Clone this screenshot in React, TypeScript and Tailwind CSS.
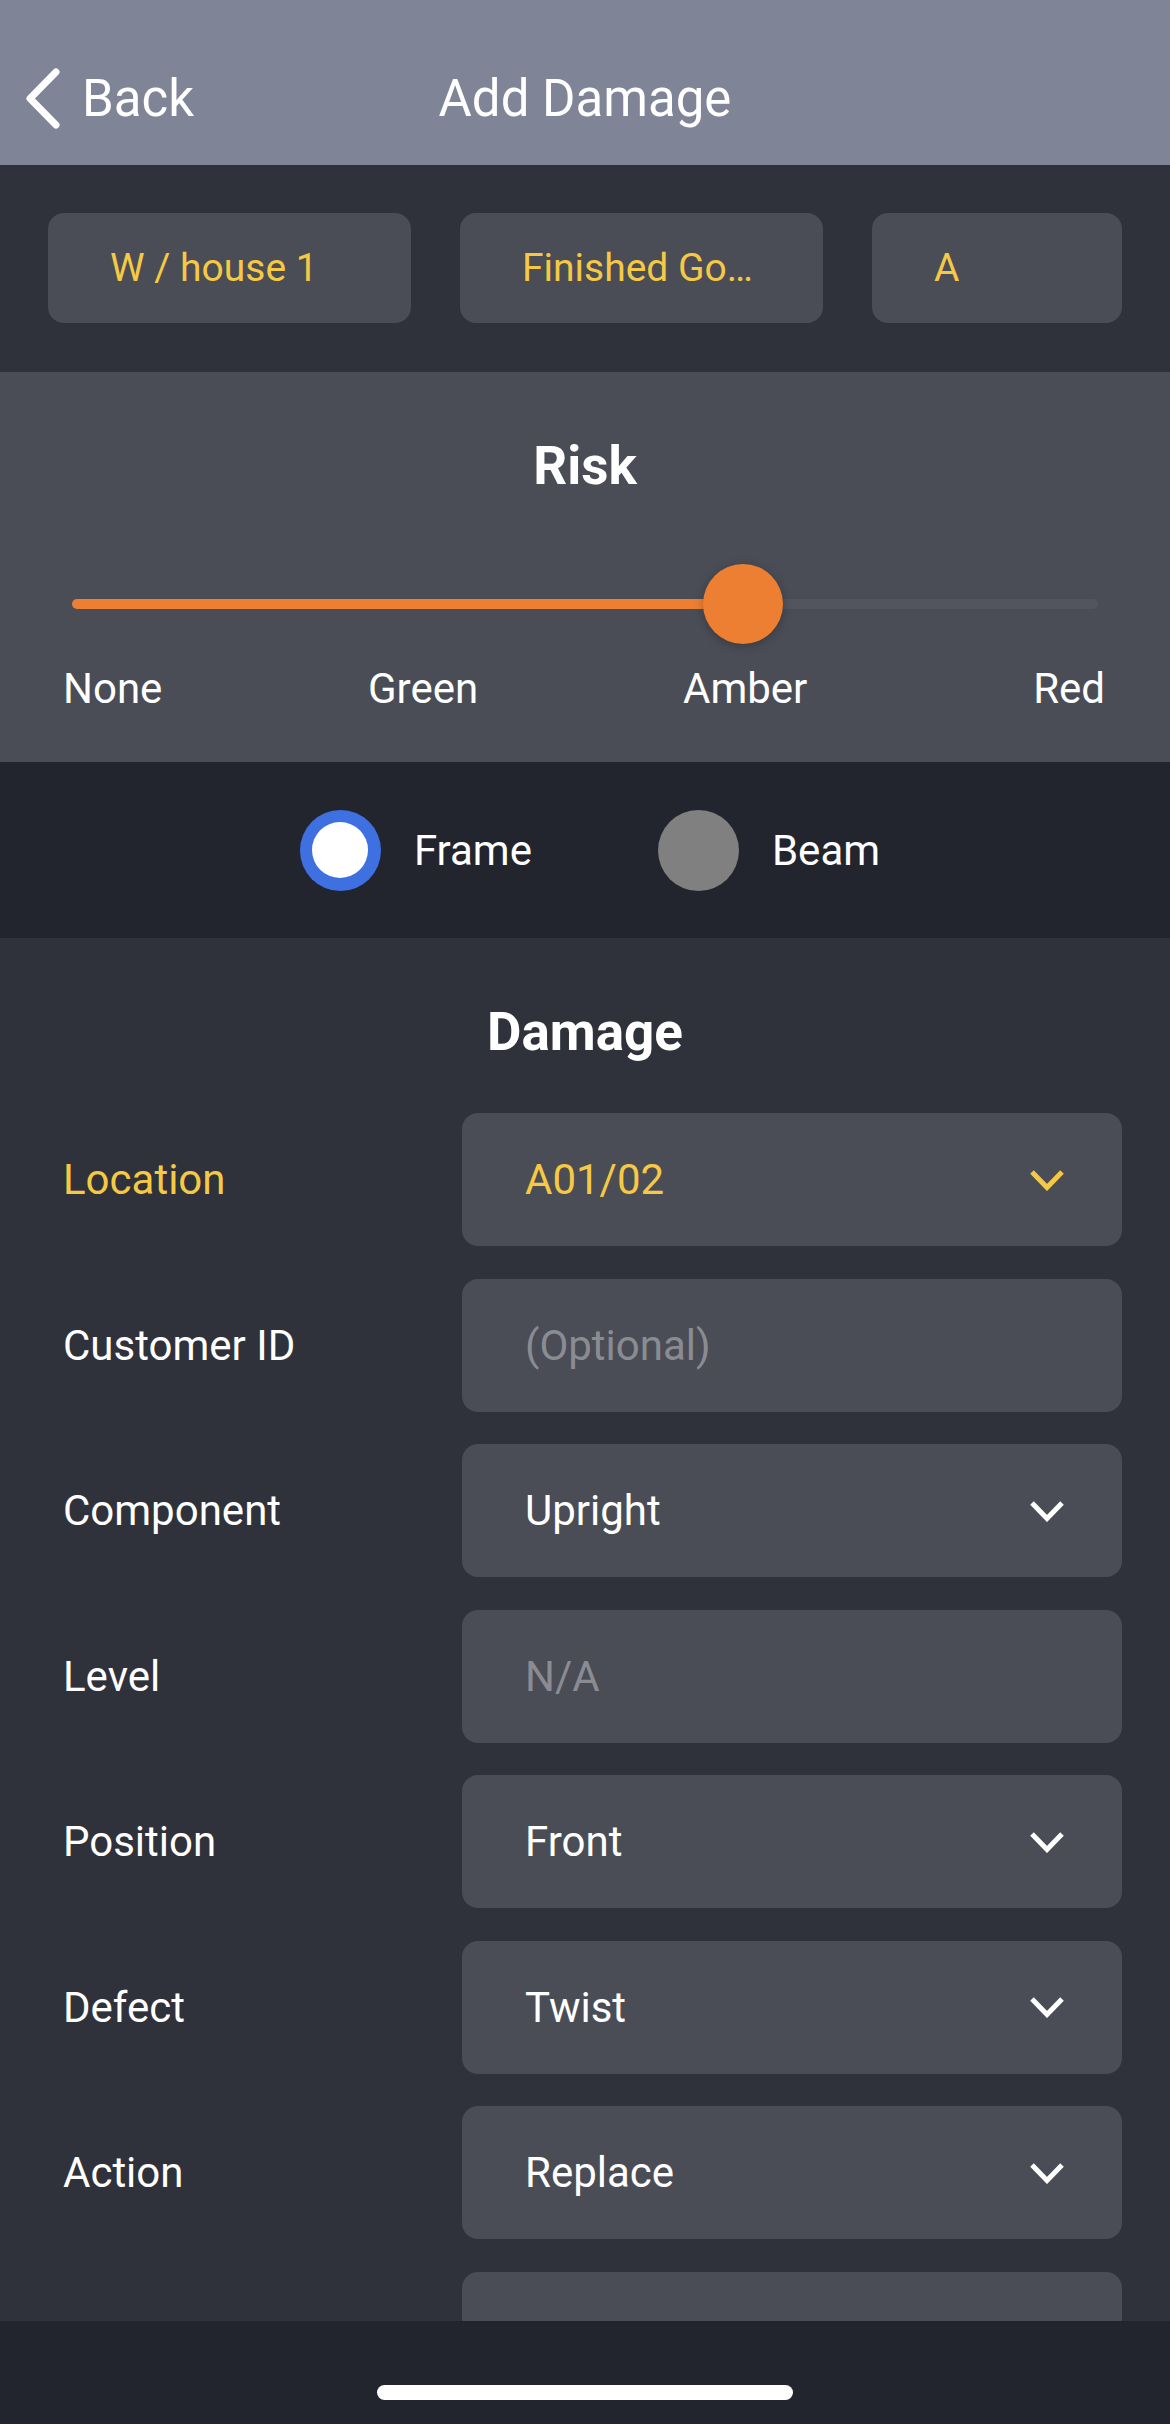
import type { ReactNode } from "react";

const CHIPS = [
  { label: "W / house 1", w: "w-[363px]" },
  { label: "Finished Goods", w: "w-[363px]" },
  { label: "A", w: "w-[250px]" },
];

type Row = {
  label: string;
  value: string;
  kind: "select" | "input" | "placeholder";
  active?: boolean;
};

const ROWS: Row[] = [
  { label: "Location", value: "A01/02", kind: "select", active: true },
  { label: "Customer ID", value: "(Optional)", kind: "placeholder" },
  { label: "Component", value: "Upright", kind: "select" },
  { label: "Level", value: "N/A", kind: "placeholder" },
  { label: "Position", value: "Front", kind: "select" },
  { label: "Defect", value: "Twist", kind: "select" },
  { label: "Action", value: "Replace", kind: "select" },
  { label: "", value: "", kind: "input" },
];

function Chevron({ color }: { color: string }) {
  return (
    <svg width="36" height="22" viewBox="0 0 36 22" fill="none" stroke={color} strokeWidth="5">
      <path d="M3 3 L18 18.5 L33 3" />
    </svg>
  );
}

function SectionTitle({ children }: { children: ReactNode }) {
  return (
    <div className="h-[60px] text-center text-[53px] font-bold leading-[60px] text-white">
      {children}
    </div>
  );
}

export default function App() {
  return (
    <div className="flex h-[2424px] w-[1170px] flex-col overflow-hidden font-['Roboto',sans-serif]">
      {/* Nav bar */}
      <header className="h-[165px] shrink-0 bg-[#7f8496] pt-[60px]">
        <div className="grid h-[76px] grid-cols-[1fr_auto_1fr] items-center">
          <div className="flex items-center pl-[24px]">
            <svg width="38" height="63" viewBox="0 0 38 63" fill="none" stroke="white" strokeWidth="7" strokeLinecap="round" strokeLinejoin="round">
              <path d="M32 5 L6 31.5 L32 58" />
            </svg>
            <span className="ml-[20px] text-[51px] leading-none text-white">Back</span>
          </div>
          <div className="text-[51px] leading-none text-white">Add Damage</div>
          <div />
        </div>
      </header>

      {/* Context chips */}
      <div className="flex h-[207px] shrink-0 gap-[49px] bg-[#2f323b] px-[48px] pt-[48px]">
        {CHIPS.map((c) => (
          <div
            key={c.label}
            className={`${c.w} flex h-[110px] items-center rounded-[16px] bg-[#4a4d56] px-[62px]`}
          >
            <span className="truncate text-[39px] text-[#f6c944]">{c.label}</span>
          </div>
        ))}
      </div>

      {/* Risk */}
      <section className="h-[390px] shrink-0 bg-[#4a4d56] pt-[64px]">
        <SectionTitle>Risk</SectionTitle>
        <div className="mt-[68px] flex h-[80px] items-center px-[72px]">
          <div className="relative h-[10px] w-full rounded-full bg-[#52555e]">
            <div className="h-[10px] w-[670px] rounded-full bg-[#ec7f31]" />
            <div className="absolute left-[631px] top-[-35px] h-[80px] w-[80px] rounded-full bg-[#ec7f31] shadow-[0_2px_10px_rgba(0,0,0,0.25)]" />
          </div>
        </div>
        <div className="mt-[20px] flex pl-[63px] pr-[65px] text-[42px] leading-[50px] text-white">
          <span className="w-[305px]">None</span>
          <span className="w-[315px]">Green</span>
          <span>Amber</span>
          <span className="ml-auto">Red</span>
        </div>
      </section>

      {/* Frame / Beam */}
      <div className="flex h-[176px] shrink-0 items-center justify-center bg-[#22252e] pl-[10px] text-[42px] text-white">
        <div className="flex h-[81px] w-[81px] items-center justify-center rounded-full bg-[#3f70e2]">
          <div className="h-[56px] w-[56px] rounded-full bg-white" />
        </div>
        <span className="ml-[33px]">Frame</span>
        <div className="ml-[126px] h-[81px] w-[81px] rounded-full bg-[#808080]" />
        <span className="ml-[33px]">Beam</span>
      </div>

      {/* Damage form */}
      <section className="h-[1383px] shrink-0 overflow-hidden bg-[#2f323b] pt-[64px]">
        <SectionTitle>Damage</SectionTitle>
        <div className="mt-[51px] flex flex-col gap-[32.5px]">
          {ROWS.map((row, i) => (
            <div key={i} className="flex items-center">
              <div
                className={`w-[462px] shrink-0 pl-[63px] text-[42px] ${
                  row.active ? "text-[#f6c944]" : "text-white"
                }`}
              >
                {row.label}
              </div>
              <div className="flex h-[133px] w-[660px] items-center justify-between rounded-[16px] bg-[#4a4d56] pl-[63px] pr-[57px]">
                <span
                  className={`text-[42px] ${
                    row.kind === "placeholder"
                      ? "text-[#8a8c92]"
                      : row.active
                        ? "text-[#f6c944]"
                        : "text-white"
                  }`}
                >
                  {row.value}
                </span>
                {row.kind === "select" && <Chevron color={row.active ? "#f6c944" : "white"} />}
              </div>
            </div>
          ))}
        </div>
      </section>

      {/* Home indicator */}
      <div className="flex h-[103px] shrink-0 justify-center bg-[#22252e] pt-[64px]">
        <div className="h-[15px] w-[416px] rounded-full bg-white" />
      </div>
    </div>
  );
}
